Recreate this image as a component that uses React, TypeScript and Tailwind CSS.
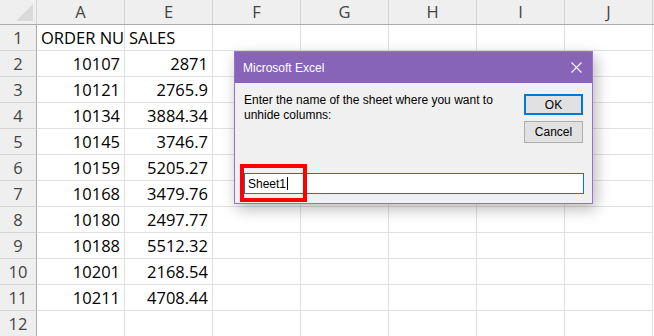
const cols = ["A", "E", "F", "G", "H", "I", "J"];

const rows: Array<[string, string]> = [
  ["ORDER NUMBER", "SALES"],
  ["10107", "2871"],
  ["10121", "2765.9"],
  ["10134", "3884.34"],
  ["10145", "3746.7"],
  ["10159", "5205.27"],
  ["10168", "3479.76"],
  ["10180", "2497.77"],
  ["10188", "5512.32"],
  ["10201", "2168.54"],
  ["10211", "4708.44"],
  ["", ""],
];

const cellFont = { fontFamily: '"Open Sans", sans-serif' };
const uiFont = { fontFamily: '"Liberation Sans", Arial, sans-serif' };

// sheet grid behind the dialog
const Sheet = () => {
  return (
    <div className="flex flex-col text-[16.5px] leading-[25px]" style={cellFont}>
      <div className="flex h-[25px] bg-[#efefef] border-b border-[#ababab]">
        <div className="w-[37px] shrink-0 border-r border-[#d4d4d4]">
          <svg width="36" height="24" viewBox="0 0 36 24">
            <polygon points="33,4 33,21 16,21" fill="#dadada" />
          </svg>
        </div>
        {cols.map((c) => (
          <div
            key={c}
            className="w-[88px] shrink-0 border-r border-[#d4d4d4] text-center text-[#444] leading-[24px]"
          >
            {c}
          </div>
        ))}
      </div>
      {rows.map((r, i) => (
        <div key={i} className="flex h-[26px]">
          <div className="w-[37px] shrink-0 bg-[#efefef] border-r border-[#ababab] border-b border-b-[#d4d4d4] text-center text-[#444]">
            {i + 1}
          </div>
          {cols.map((c, j) => {
            const value = j < 2 ? r[j] : "";
            const isText = i === 0;
            return (
              <div
                key={c}
                className={
                  isText
                    ? "w-[88px] shrink-0 border-r border-b border-[#e1e1e1] pl-[4px] overflow-hidden whitespace-nowrap text-black"
                    : "w-[88px] shrink-0 border-r border-b border-[#e1e1e1] pr-[4px] text-right whitespace-nowrap text-black"
                }
              >
                {value}
              </div>
            );
          })}
        </div>
      ))}
    </div>
  );
};

const InputDialog = () => {
  return (
    <div
      className="absolute left-[234px] top-[51px] w-[359px] h-[153px] flex flex-col border border-[#9573c6] bg-[#f0f0f0] shadow-[3px_5px_14px_rgba(0,0,0,0.28)] text-[12px]"
      style={uiFont}
    >
      <div className="h-[31px] shrink-0 bg-[#8764b8] flex items-center justify-between pl-[8px] pr-[10px] text-white">
        <span>Microsoft Excel</span>
        <svg width="11" height="11" viewBox="0 0 11 11">
          <path d="M0.5 0.5 L10.5 10.5 M10.5 0.5 L0.5 10.5" stroke="#fff" strokeWidth="1.1" />
        </svg>
      </div>
      <div className="flex-1 flex flex-col pl-[9px] pr-[8px] pb-[9px]">
        <div className="flex justify-between">
          <p className="mt-[10px] leading-[15px] text-black">
            Enter the name of the sheet where you want to
            <br />
            unhide columns:
          </p>
          <div className="mt-[11px] mr-[1px] flex flex-col gap-[6px]">
            <button className="w-[59px] h-[21px] bg-[#e1e1e1] border-2 border-[#0078d7] text-black leading-none">
              OK
            </button>
            <button className="w-[59px] h-[22px] bg-[#e1e1e1] border border-[#adadad] text-black leading-none">
              Cancel
            </button>
          </div>
        </div>
        <div className="mt-auto h-[21px] border border-[#0078d7] bg-white flex items-center pl-[3px] text-black">
          <span>Sheet1</span>
          <span className="ml-[1px] w-[1px] h-[13px] bg-black" />
        </div>
      </div>
    </div>
  );
};

export default function App() {
  return (
    <div className="relative w-[654px] h-[336px] overflow-hidden bg-white">
      <Sheet />
      <InputDialog />
      <div className="absolute left-[240px] top-[164px] w-[67px] h-[38px] border-[4px] border-[#ff0000]" />
    </div>
  );
}
